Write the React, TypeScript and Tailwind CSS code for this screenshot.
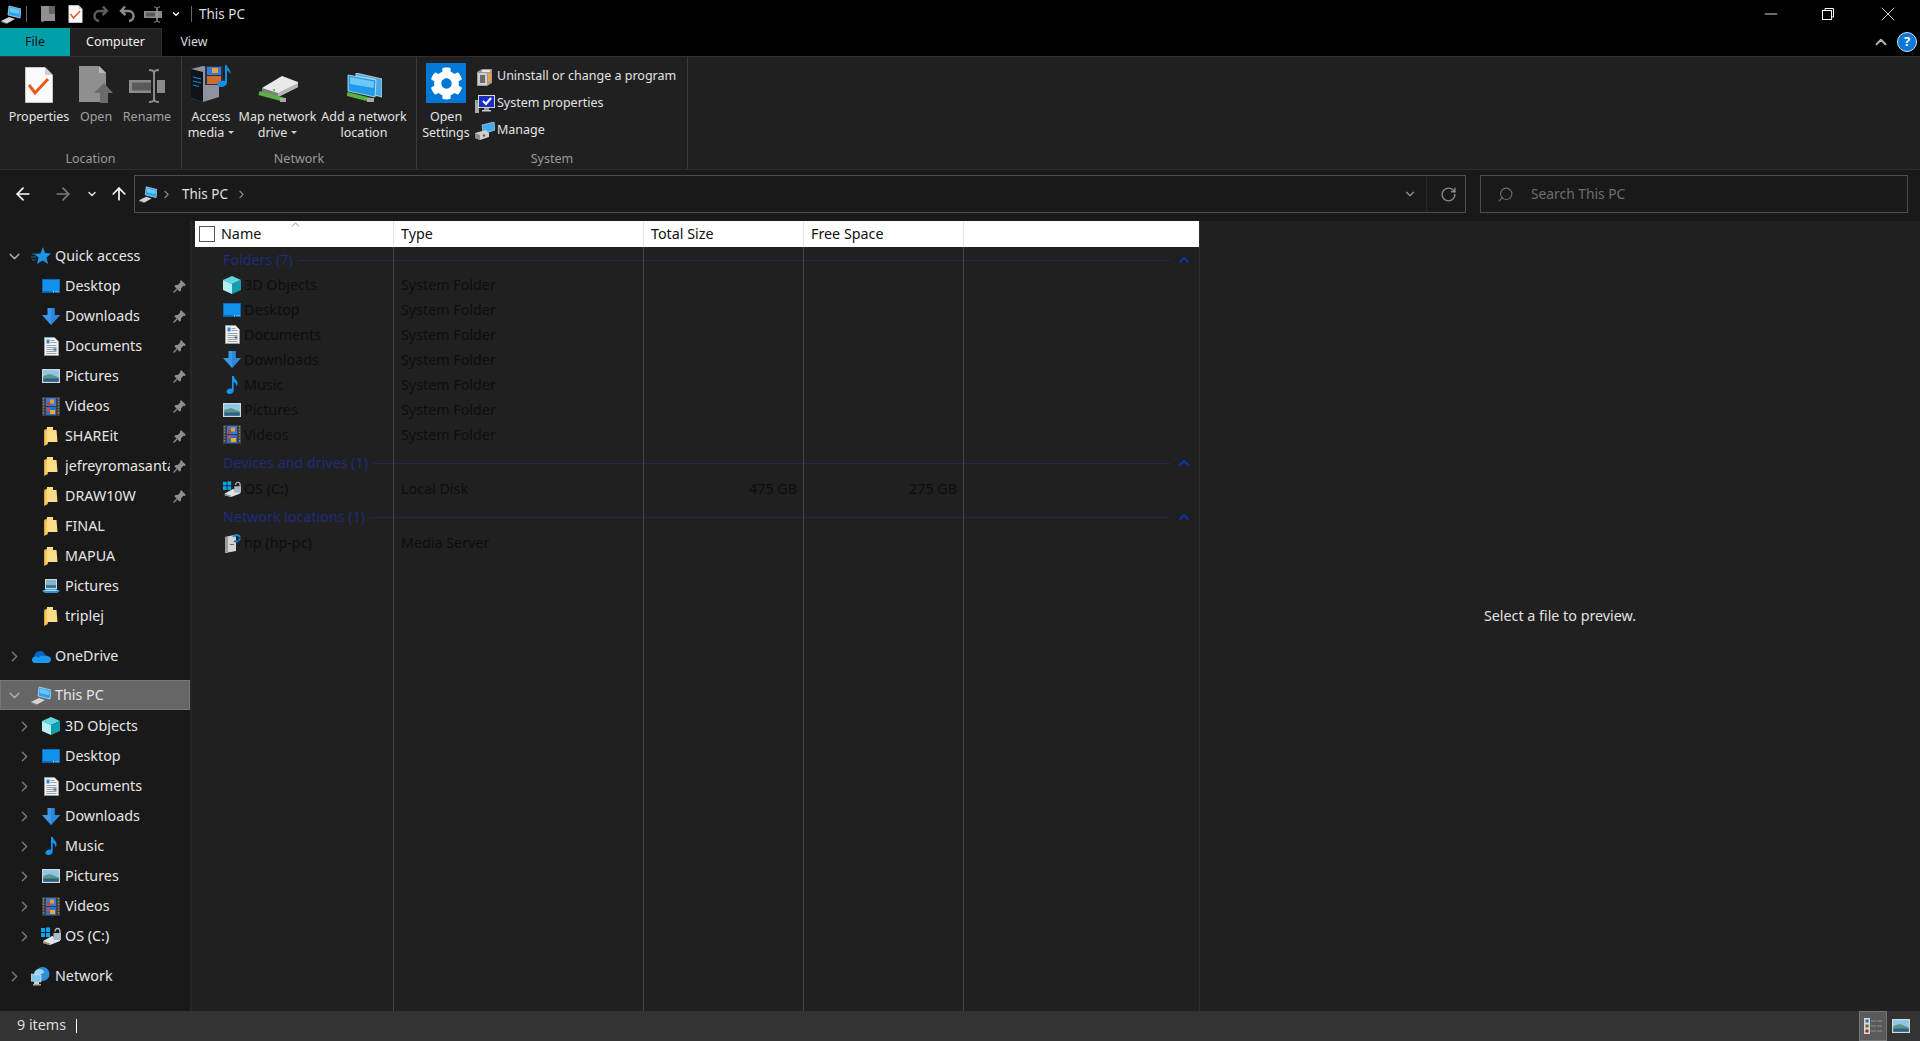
import type { ReactNode } from "react";
import { ArrowLeft, ArrowRight, ArrowUp, ChevronDown, ChevronRight, ChevronUp, Minus, RotateCw, Search, X } from "lucide-react";
import { FaCog } from "react-icons/fa";

const font = "font-['Noto_Sans','Liberation_Sans',sans-serif]";

function PcIcon({ w = 20 }: { w?: number }) {
  return (
    <svg width={w} height={w} viewBox="0 0 20 20">
      <polygon points="8,2 20,5 19,14 7,11" fill="#2aa4ee" stroke="#b9d9ee" strokeWidth="0.8" />
      <polygon points="9,3.5 18.5,6 18,10 8.5,8" fill="#6cc6f5" />
      <polygon points="0,17 8,13 14,15 6,19.5" fill="#d4d4d4" />
      <polygon points="0,17 6,19.5 6,20 0,18" fill="#8a8a8a" />
    </svg>
  );
}

function StarIcon() {
  return (
    <svg width="20" height="20" viewBox="0 0 20 20">
      <polygon points="12,1 14,7 20,7.5 15.5,11.5 17,18 11.5,14.5 6,18 7.5,11.5 3,8 9.5,7.5" fill="#1f93ea" />
      <path d="M1 8h4M0 11h5M1 14h4" stroke="#1668a8" strokeWidth="1" />
    </svg>
  );
}

function DesktopIcon() {
  return (
    <svg width="18" height="14" viewBox="0 0 18 14">
      <rect width="18" height="14" fill="#0c5fa8" />
      <rect x="0.7" y="0.7" width="16.6" height="12" fill="#1190ee" />
      <rect x="1" y="12" width="16" height="1" fill="#0b6cc0" />
      <path d="M11 12.7h1M13.5 12.7h1M15.5 12.7h1" stroke="#fff" strokeWidth="1" />
    </svg>
  );
}

function DownloadIcon() {
  return (
    <svg width="18" height="17" viewBox="0 0 18 17">
      <polygon points="5.5,0 12.5,0 12.5,7 18,7 9,17 0,7 5.5,7" fill="#3c97e9" />
      <polygon points="9,0 12.5,0 12.5,7 18,7 9,17" fill="#2b86de" />
    </svg>
  );
}

function DocIcon() {
  return (
    <svg width="15" height="19" viewBox="0 0 15 19">
      <polygon points="0.5,0.5 10.5,0.5 14.5,4.5 14.5,18.5 0.5,18.5" fill="#f1f1f1" stroke="#9a9a9a" />
      <rect x="2.5" y="2.5" width="3" height="4" fill="#2a8be0" />
      <path d="M6.5 3.5h4M6.5 5.5h6M2.5 8.5h10M2.5 10.5h10M2.5 12.5h7M2.5 14.5h10M2.5 16.5h10" stroke="#8d9aa8" strokeWidth="0.9" />
      <rect x="9.5" y="11.5" width="3" height="2" fill="#4a6a8a" />
    </svg>
  );
}

function PictureIcon() {
  return (
    <svg width="18" height="14" viewBox="0 0 18 14">
      <rect width="18" height="14" fill="#d6d6d6" />
      <rect x="1.2" y="1.2" width="15.6" height="11.6" fill="#8ec6e8" />
      <polygon points="1.2,7 8,5 16.8,8.5 16.8,10 1.2,10" fill="#5f9488" />
      <rect x="1.2" y="9.5" width="15.6" height="3.3" fill="#2e5f86" />
    </svg>
  );
}

function VideoIcon() {
  return (
    <svg width="18" height="19" viewBox="0 0 18 19">
      <rect width="18" height="19" fill="#3d3d3d" />
      <path d="M1.5 1v17M16.5 1v17" stroke="#8a8a8a" strokeWidth="1.4" strokeDasharray="1.4 1.4" />
      <rect x="4" y="1" width="10" height="8" fill="#3b78d8" />
      <rect x="8" y="2.5" width="4" height="4" fill="#e0a02a" />
      <rect x="5" y="5" width="3" height="3.5" fill="#c83e2e" />
      <rect x="4" y="10" width="10" height="8" fill="#2f6cd0" />
      <rect x="8" y="13" width="5" height="4" fill="#e2b030" />
      <rect x="5" y="11" width="3" height="3" fill="#d54a30" />
    </svg>
  );
}

function FolderIcon() {
  return (
    <svg width="14" height="19" viewBox="0 0 14 19">
      <polygon points="0,3 4,1 4,17 0,19" fill="#d9a93f" />
      <polygon points="3,0 9,0 9,3 12.5,3 13.5,15 3,15" fill="#fbdc87" />
      <polygon points="1,4 3,3 3,17 1,18" fill="#f3c860" />
    </svg>
  );
}

function PinIcon() {
  return (
    <svg width="13" height="13" viewBox="0 0 13 13">
      <polygon points="8,0 13,5 11.5,6 10.5,5.8 8,8.3 8,10.5 6.8,11.7 1.3,6.2 2.5,5 4.7,5 7.2,2.5 7,1.5" fill="#8b8e92" />
      <path d="M4 9L0.5 12.5" stroke="#8b8e92" strokeWidth="1.3" />
    </svg>
  );
}

function OneDriveIcon() {
  return (
    <svg width="20" height="13" viewBox="0 0 20 13">
      <path d="M3.5 7.5a5.5 5.5 0 0 1 10.5-3 4.5 4.5 0 0 1 2 3z" fill="#0864c8" />
      <path d="M4 13a3.2 3.2 0 0 1-.6-6.3c1.5-.3 3-.1 4 1 1.6-1.6 4-2.300 6-1.500 1.200-.7 3-.4 4.400.4A3.300 3.300 0 0 1 17 13z" fill="#1b98f0" />
    </svg>
  );
}

function CubeIcon() {
  return (
    <svg width="18" height="18" viewBox="0 0 18 18">
      <polygon points="9,0 18,4 9,8 0,4" fill="#62d6e2" />
      <polygon points="0,4 9,8 9,18 0,14" fill="#b4f0f2" />
      <polygon points="18,4 9,8 9,18 18,14" fill="#149fb0" />
    </svg>
  );
}

function MusicIcon() {
  return (
    <svg width="12" height="18" viewBox="0 0 12 18">
      <path d="M6 0h1.800c.3 3 4.200 4 3.700 8-.1 1-.5 1.800-1 2.400.2-2.400-1.400-4-2.800-4.600V14.500c0 2-2 3.500-4.200 3.500C1.600 18 .4 17 .4 15.500c0-1.900 2.700-3.500 5.600-3z" fill="#1296f0" />
    </svg>
  );
}

function DriveIcon() {
  return (
    <svg width="20" height="18" viewBox="0 0 20 18">
      <rect x="0" y="1" width="4" height="4" fill="#00a8f0" />
      <rect x="5" y="0.5" width="4" height="4.5" fill="#00a8f0" />
      <rect x="0" y="6" width="4" height="4" fill="#00a8f0" />
      <rect x="5" y="6" width="4" height="4" fill="#00a8f0" />
      <polygon points="2,14 11,9 19,12 19,14 9,18 2,16" fill="#e4e4e4" />
      <polygon points="2,14 9,16.5 9,18 2,16" fill="#8e8e8e" />
      <path d="M14 4.5a2.5 3 0 0 1 5 0V7" fill="none" stroke="#b9b9b9" strokeWidth="1.3" />
      <rect x="12.5" y="6" width="7.5" height="7" fill="#a9bccb" />
    </svg>
  );
}

function NetworkIcon() {
  return (
    <svg width="20" height="19" viewBox="0 0 20 19">
      <circle cx="11.5" cy="7" r="7" fill="#2c8fdc" />
      <path d="M8 2c3 0 5 1.500 5 3s-3 2-5 3-2 3 0 4c-3-1-5-3-5-5s2-5 5-5z" fill="#9bd4f4" />
      <polygon points="0,7 10,8 10,15 0,14" fill="#7cc8f4" stroke="#dcdcdc" strokeWidth="0.8" />
      <rect x="3" y="15" width="5" height="2" fill="#cfcfcf" />
      <rect x="2" y="17" width="8" height="1.5" fill="#a9a9a9" />
    </svg>
  );
}

function LaptopPictureIcon() {
  return (
    <svg width="18" height="14" viewBox="0 0 18 14">
      <rect x="3" y="0" width="12" height="10" fill="#d5d5d5" />
      <rect x="4" y="1" width="10" height="8" fill="#7fb7d8" />
      <rect x="4" y="6" width="10" height="3" fill="#3f7486" />
      <polygon points="0,12 4,10 14,10 18,12 15,14 3,14" fill="#2d93d9" />
      <polygon points="1,12 5,10.7 13,10.7 17,12" fill="#b6ddf5" />
    </svg>
  );
}

function MediaServerIcon() {
  return (
    <svg width="18" height="20" viewBox="0 0 18 20">
      <polygon points="2,4 11,2 13,4 13,18 2,20" fill="#d4d4d4" />
      <polygon points="2,4 5,3.5 5,19.5 2,20" fill="#9b9b9b" />
      <rect x="7" y="11" width="4" height="1" fill="#6a6a6a" />
      <path d="M10 4a4 4 0 0 1 7 0" fill="none" stroke="#1a8ee0" strokeWidth="2" />
      <path d="M17 5a4 4 0 0 1-6 3" fill="none" stroke="#1a6ec0" strokeWidth="2" />
    </svg>
  );
}

function PageCheckIcon({ w = 28, h = 36 }: { w?: number; h?: number }) {
  return (
    <svg width={w} height={h} viewBox="0 0 28 36">
      <polygon points="0.5,0.5 20,0.5 27.5,8 27.5,35.5 0.5,35.5" fill="#fafafa" stroke="#c8c8c8" />
      <polygon points="20,0.5 20,8 27.5,8" fill="#cfcfcf" />
      <path d="M4 18l6 8L23 12" fill="none" stroke="#ea5a1f" strokeWidth="3" />
    </svg>
  );
}

function OpenIcon() {
  return (
    <svg width="34" height="37" viewBox="0 0 34 37">
      <polygon points="0,0 20,0 27,7 27,36 0,36" fill="#8f8f8f" />
      <polygon points="20,0 20,7 27,7" fill="#b9b9b9" />
      <polygon points="25,17 34,27 29,27 29,37 21,37 21,27 15,27" fill="#6b6b6b" />
    </svg>
  );
}

function RenameIcon() {
  return (
    <svg width="36" height="34" viewBox="0 0 36 34">
      <rect x="0" y="11" width="36" height="13" fill="#8a8a8a" />
      <rect x="3" y="13.5" width="19" height="8" fill="#5a5a5a" />
      <rect x="22" y="9" width="6" height="17" fill="#202020" />
      <path d="M20 1c3 0 5 1 5 3v26c0 2-2 3-5 3M30 1c-3 0-5 1-5 3v26c0 2 2 3 5 3" fill="none" stroke="#8a8a8a" strokeWidth="2" />
    </svg>
  );
}

function AccessMediaIcon() {
  return (
    <svg width="40" height="38" viewBox="0 0 40 38">
      <polygon points="0,4 12,1 28,4 28,32 12,37 0,33" fill="#8d94a0" />
      <polygon points="0,4 12,7 12,37 0,33" fill="#0f1319" />
      <path d="M2 12l8 2M2 16l8 2M2 20l6 1.500" stroke="#1a8fe0" strokeWidth="1" />
      <rect x="14" y="1" width="18" height="19" fill="#26364a" />
      <rect x="16" y="2" width="14" height="8" fill="#3f78d0" />
      <rect x="21" y="3" width="6" height="5" fill="#e2a040" />
      <rect x="16" y="11" width="14" height="8" fill="#d06a30" />
      <path d="M34 0h1.500c.5 3 4.500 4 4 9-.8-2-2.500-3-3.500-3.500V18c0 2-3 4-6 4-2.500 0-3.500-1-3.500-2.500 0-2.500 3.500-4.500 7.500-3.500z" fill="#0f8fe8" />
    </svg>
  );
}

function MapDriveIcon() {
  return (
    <svg width="40" height="27" viewBox="0 0 40 27">
      <polygon points="4,12 24,0 40,6 40,11 20,21 4,16" fill="#e9e9e9" />
      <polygon points="4,12 20,17 20,21 4,16" fill="#7e7e7e" />
      <polygon points="20,17 40,7 40,11 20,21" fill="#b5b5b5" />
      <rect x="15" y="13" width="2" height="2" fill="#3bd23b" />
      <path d="M1 17l26 7" stroke="#58b33f" strokeWidth="4" />
      <rect x="22" y="22" width="6" height="4" fill="#a9a9a9" />
    </svg>
  );
}

function AddLocationIcon() {
  return (
    <svg width="35" height="30" viewBox="0 0 35 30">
      <polygon points="9,0 35,6 35,24 27,22 27,6 9,3" fill="#4aa9e0" stroke="#cfe6f5" strokeWidth="0.8" />
      <polygon points="1,2 29,7 28,24 1,18" fill="#1f9bea" stroke="#cfe6f5" strokeWidth="0.8" />
      <polygon points="3,4 27,8.5 26.5,15 3,11" fill="#6cc8f5" />
      <path d="M0 21l24 6" stroke="#58b33f" strokeWidth="4" />
      <rect x="20" y="25" width="7" height="4" fill="#a9a9a9" />
    </svg>
  );
}

function UninstallIcon() {
  return (
    <svg width="16" height="18" viewBox="0 0 16 18">
      <polygon points="0,4 5,1 15,1 15,15 10,18 0,18" fill="#9c9c9c" />
      <polygon points="1,5 10,5 10,17 1,17" fill="#cfcfcf" />
      <rect x="11" y="5" width="3" height="9" fill="#f0a030" />
      <rect x="3" y="7" width="5" height="8" fill="#6b6b6b" />
      <rect x="5" y="2" width="8" height="2" fill="#e8e8e8" />
    </svg>
  );
}

function SystemPropsIcon() {
  return (
    <svg width="20" height="18" viewBox="0 0 20 18">
      <rect x="0" y="5" width="4" height="13" fill="#a8a8a8" />
      <rect x="1" y="6" width="2" height="2" fill="#3bd23b" />
      <rect x="3" y="0" width="17" height="13" fill="#d8d8d8" />
      <rect x="4" y="1" width="15" height="11" fill="#1a2fc0" />
      <path d="M8 6l3 3 5-6" fill="none" stroke="#fff" strokeWidth="2" />
      <rect x="9" y="13" width="5" height="2" fill="#9a9a9a" />
      <rect x="7" y="15" width="9" height="1.5" fill="#c8c8c8" />
    </svg>
  );
}

function ManageIcon() {
  return (
    <svg width="20" height="18" viewBox="0 0 20 18">
      <polygon points="7,3 19,0 20,8 8,12" fill="#42aaef" stroke="#d5e6f0" strokeWidth="0.6" />
      <polygon points="0,11 11,8 14,11 14,15 5,18 0,16" fill="#cfcfcf" />
      <polygon points="0,11 5,13 5,18 0,16" fill="#8c8c8c" />
      <circle cx="9" cy="13.5" r="1.3" fill="#666" />
    </svg>
  );
}

function QatPage() {
  return (
    <svg width="14" height="16" viewBox="0 0 14 16">
      <polygon points="0,0 9,0 14,0 14,15 4,15 1,16 0,15" fill="#8f8f8f" />
      <rect x="8" y="0" width="6" height="8" fill="#000" opacity="0.3" />
    </svg>
  );
}

function QatUndo({ flip }: { flip?: boolean }) {
  return (
    <svg width="16" height="18" viewBox="0 0 16 18" className={flip ? "-scale-x-100" : ""}>
      <path d="M6 1.500L2 6l4.500 4M2.500 6H9a5 5 0 0 1 1 10" fill="none" stroke={flip ? "#5c5c5c" : "#8a8a8a"} strokeWidth="2.4" />
    </svg>
  );
}

function QatRename() {
  return (
    <svg width="18" height="17" viewBox="0 0 18 17">
      <rect x="0" y="5" width="18" height="7" fill="#8a8a8a" />
      <rect x="2" y="6.5" width="9" height="4" fill="#5a5a5a" />
      <path d="M10 1c2 0 3 .5 3 1.500v12c0 1-1 1.500-3 1.500M16 1c-2 0-3 .5-3 1.500v12c0 1 1 1.500 3 1.500" fill="none" stroke="#9a9a9a" strokeWidth="1" />
    </svg>
  );
}

function RibbonButton({ w, icon, lines, dim, arrow, className = "" }: { w: string; icon: ReactNode; lines: string[]; dim?: boolean; arrow?: boolean; className?: string }) {
  return (
    <div className={`${w} flex flex-col items-center ${className}`}>
      <div className="h-[46px] flex items-end justify-center">{icon}</div>
      <div className={`mt-[6px] text-center leading-[16px] whitespace-nowrap ${dim ? "text-[#a0a0a0]" : "text-[#e2e2e2]"}`}>
        {lines.map((l, i) => (
          <div key={l}>
            {l}
            {arrow && i === lines.length - 1 && (
              <span className="inline-block ml-[4px] mb-[3px] border-x-[3.5px] border-t-[3.5px] border-x-transparent border-t-[#d0d0d0]" />
            )}
          </div>
        ))}
      </div>
    </div>
  );
}

function RibbonGroup({ w, label, children }: { w: string; label: string; children: ReactNode }) {
  return (
    <div className={`${w} flex flex-col border-r border-[#3a3a3a]`}>
      <div className="h-[93px] flex">{children}</div>
      <div className="text-center text-[#9a9a9a] leading-[18px]">{label}</div>
    </div>
  );
}

type NavItem = { label: string; icon: ReactNode; pin?: boolean };

const quick: NavItem[] = [
  { label: "Desktop", icon: <DesktopIcon />, pin: true },
  { label: "Downloads", icon: <DownloadIcon />, pin: true },
  { label: "Documents", icon: <DocIcon />, pin: true },
  { label: "Pictures", icon: <PictureIcon />, pin: true },
  { label: "Videos", icon: <VideoIcon />, pin: true },
  { label: "SHAREit", icon: <FolderIcon />, pin: true },
  { label: "jefreyromasanta", icon: <FolderIcon />, pin: true },
  { label: "DRAW10W", icon: <FolderIcon />, pin: true },
  { label: "FINAL", icon: <FolderIcon /> },
  { label: "MAPUA", icon: <FolderIcon /> },
  { label: "Pictures", icon: <LaptopPictureIcon /> },
  { label: "triplej", icon: <FolderIcon /> },
];

const pcItems: NavItem[] = [
  { label: "3D Objects", icon: <CubeIcon /> },
  { label: "Desktop", icon: <DesktopIcon /> },
  { label: "Documents", icon: <DocIcon /> },
  { label: "Downloads", icon: <DownloadIcon /> },
  { label: "Music", icon: <MusicIcon /> },
  { label: "Pictures", icon: <PictureIcon /> },
  { label: "Videos", icon: <VideoIcon /> },
  { label: "OS (C:)", icon: <DriveIcon /> },
];

function TopRow({ label, icon, open, selected, className = "" }: { label: string; icon: ReactNode; open?: boolean; selected?: boolean; className?: string }) {
  return (
    <div className={`h-[30px] flex items-center pl-[5px] text-[#e6e6e6] border ${selected ? "bg-[#666666] border-[#777777]" : "border-transparent"} ${className}`}>
      {open ? <ChevronDown size={17} className="text-[#a8a8a8] shrink-0" /> : <ChevronRight size={17} className="text-[#7a7a7a] shrink-0" />}
      <span className="w-[20px] ml-[8px] flex justify-center shrink-0">{icon}</span>
      <span className="ml-[4px]">{label}</span>
    </div>
  );
}

function SubRow({ item, chevron }: { item: NavItem; chevron?: boolean }) {
  return (
    <div className="h-[30px] flex items-center pl-[16px] pr-[5px] text-[#e6e6e6]">
      <span className="w-[16px] shrink-0">{chevron && <ChevronRight size={17} className="text-[#7a7a7a]" />}</span>
      <span className="w-[20px] ml-[9px] flex justify-center shrink-0">{item.icon}</span>
      <span className="ml-[4px] w-[105px] overflow-hidden whitespace-nowrap shrink-0">{item.label}</span>
      {item.pin && <span className="ml-[3px]"><PinIcon /></span>}
    </div>
  );
}

const cols = "grid grid-cols-[199px_250px_160px_160px_1fr]";

function GroupHeader({ label, className = "" }: { label: string; className?: string }) {
  return (
    <div className={`h-[26px] flex items-center pl-[28px] pr-[7px] text-[#1f2b7c] ${className}`}>
      <span className="whitespace-nowrap">{label}</span>
      <span className="flex-1 h-px bg-[#1a2b52] ml-[5px]" />
      <ChevronUp size={16} strokeWidth={3.5} className="text-[#0b33a0] ml-[6px]" />
    </div>
  );
}

function FileRow({ icon, name, type, total, free, className = "" }: { icon: ReactNode; name: string; type: string; total?: string; free?: string; className?: string }) {
  return (
    <div className={`${cols} h-[25px] items-center text-[#0e0e0e] ${className}`}>
      <div className="flex items-center pl-[28px]">
        <span className="w-[18px] flex justify-center shrink-0">{icon}</span>
        <span className="ml-[3px]">{name}</span>
      </div>
      <div className="pl-[7px]">{type}</div>
      <div className="pr-[7px] text-right">{total}</div>
      <div className="pr-[7px] text-right">{free}</div>
      <div />
    </div>
  );
}

function HeaderCell({ label, className = "" }: { label: string; className?: string }) {
  return <div className={`h-full flex items-center pl-[7px] border-r border-[#e5e5e5] ${className}`}>{label}</div>;
}

const folders: [ReactNode, string][] = [
  [<CubeIcon />, "3D Objects"],
  [<DesktopIcon />, "Desktop"],
  [<DocIcon />, "Documents"],
  [<DownloadIcon />, "Downloads"],
  [<MusicIcon />, "Music"],
  [<PictureIcon />, "Pictures"],
  [<VideoIcon />, "Videos"],
];

export default function App() {
  return (
    <div className={`${font} h-screen w-full flex flex-col bg-[#202020] text-[14.3px] overflow-hidden`}>
      {/* title bar */}
      <div className="h-[28px] bg-black flex items-center shrink-0 text-[13.5px]">
        <span className="ml-[1px] w-[20px]"><PcIcon /></span>
        <span className="ml-[5px] w-px h-[16px] bg-[#666666]" />
        <span className="ml-[14px]"><QatPage /></span>
        <span className="ml-[13px]"><PageCheckIcon w={15} h={18} /></span>
        <span className="ml-[10px]"><QatUndo flip /></span>
        <span className="ml-[10px]"><QatUndo /></span>
        <span className="ml-[9px]"><QatRename /></span>
        <ChevronDown size={10} className="ml-[9px] text-white" strokeWidth={3} />
        <span className="ml-[10px] w-px h-[16px] bg-[#666666]" />
        <span className="ml-[7px] text-[#dddddd]">This PC</span>
        <div className="ml-auto flex items-center">
          <Minus size={20} className="text-white mr-[41px]" strokeWidth={1} />
          <svg width="12" height="12" viewBox="0 0 12 12" className="mr-[42px]">
            <rect x="0.5" y="2.5" width="9" height="9" fill="none" stroke="#fff" />
            <path d="M3 2.500V.5h8.500V9H9.500" fill="none" stroke="#fff" />
          </svg>
          <X size={24} className="text-white mr-[20px]" strokeWidth={0.8} />
        </div>
      </div>
      {/* tabs */}
      <div className="h-[28px] bg-black flex items-stretch shrink-0 text-[12.4px]">
        <div className="w-[70px] bg-[#00a0a8] flex items-center justify-center text-[#101010]">File</div>
        <div className="w-[92px] bg-[#202020] border-t border-r border-[#2f2f2f] flex items-center justify-center text-[#f0f0f0]">Computer</div>
        <div className="w-[64px] flex items-center justify-center text-[#dddddd]">View</div>
        <div className="ml-auto flex items-center pr-[3px]">
          <ChevronUp size={18} className="text-[#b0b0b0] mr-[7px]" strokeWidth={2.5} />
          <span className="w-[20px] h-[20px] rounded-full bg-[#0b78d8] border border-[#cfe4f5] text-white text-[13px] font-bold flex items-center justify-center">?</span>
        </div>
      </div>
      {/* ribbon */}
      <div className="h-[114px] border-y border-[#2f2f2f] flex shrink-0 text-[12.5px]">
        <RibbonGroup w="w-[182px]" label="Location">
          <div className="w-[5px]" />
          <RibbonButton w="w-[68px]" icon={<PageCheckIcon />} lines={["Properties"]} />
          <RibbonButton w="w-[46px]" icon={<OpenIcon />} lines={["Open"]} dim />
          <RibbonButton w="w-[56px]" icon={<RenameIcon />} lines={["Rename"]} dim />
        </RibbonGroup>
        <RibbonGroup w="w-[235px]" label="Network">
          <div className="w-[1px]" />
          <RibbonButton w="w-[56px]" icon={<AccessMediaIcon />} lines={["Access", "media"]} arrow />
          <RibbonButton w="w-[77px]" icon={<MapDriveIcon />} lines={["Map network", "drive"]} arrow />
          <RibbonButton w="w-[90px]" className="ml-[3px]" icon={<AddLocationIcon />} lines={["Add a network", "location"]} />
        </RibbonGroup>
        <RibbonGroup w="w-[271px]" label="System">
          <div className="w-[4px]" />
          <div className="w-[50px] flex flex-col items-center">
            <div className="h-[46px] flex items-end justify-center">
              <span className="w-[40px] h-[40px] bg-[#0078d7] flex items-center justify-center text-white"><FaCog size={33} /></span>
            </div>
            <div className="mt-[6px] text-center leading-[16px] text-[#e2e2e2]"><div>Open</div><div>Settings</div></div>
          </div>
          <div className="ml-[3px] flex flex-col pt-[6px] text-[#e2e2e2]">
            {[
              { l: "Uninstall or change a program", i: <UninstallIcon /> },
              { l: "System properties", i: <SystemPropsIcon /> },
              { l: "Manage", i: <ManageIcon /> },
            ].map((r) => (
              <div key={r.l} className="h-[27px] flex items-center whitespace-nowrap">
                <span className="w-[21px] flex justify-center shrink-0">{r.i}</span>
                <span className="ml-[2px]">{r.l}</span>
              </div>
            ))}
          </div>
        </RibbonGroup>
      </div>
      {/* navigation */}
      <div className="h-[51px] bg-[#191919] flex items-start pt-[5px] shrink-0 text-[13.5px]">
        <div className="w-[134px] h-[38px] flex items-center shrink-0">
          <ArrowLeft size={20} className="ml-[13px] text-white" strokeWidth={2} />
          <ArrowRight size={20} className="ml-[20px] text-[#7c7c7c]" strokeWidth={2} />
          <ChevronDown size={12} className="ml-[13px] text-[#e0e0e0]" strokeWidth={3} />
          <ArrowUp size={20} className="ml-[11px] text-white" strokeWidth={2} />
        </div>
        <div className="w-[1332px] h-[38px] border border-[#4d4d4d] flex items-center text-[#e0e0e0]">
          <span className="ml-[4px]"><PcIcon w={18} /></span>
          <ChevronRight size={13} className="ml-[3px] text-[#888888]" />
          <span className="ml-[9px]">This PC</span>
          <ChevronRight size={13} className="ml-[7px] text-[#888888]" />
          <ChevronDown size={14} className="ml-auto mr-[9px] text-[#8a8a8a]" strokeWidth={2.5} />
          <div className="w-px h-full bg-[#262626]" />
          <RotateCw size={17} className="ml-[13px] mr-[8px] text-[#8a8a8a]" strokeWidth={2} />
        </div>
        <div className="ml-[14px] w-[428px] h-[38px] border border-[#4d4d4d] flex items-center text-[#6e6e6e] text-[13.8px]">
          <Search size={17} className="ml-[16px] -scale-x-100" strokeWidth={1.5} />
          <span className="ml-[17px]">Search This PC</span>
        </div>
      </div>
      {/* body */}
      <div className="flex-1 min-h-0 flex">
        <div className="w-[192px] shrink-0 bg-[#191919] border-r-2 border-[#262626] pt-[20px]">
          <TopRow label="Quick access" icon={<StarIcon />} open />
          {quick.map((q, i) => <SubRow key={i} item={q} />)}
          <TopRow label="OneDrive" icon={<OneDriveIcon />} className="mt-[10px]" />
          <TopRow label="This PC" icon={<PcIcon />} open selected className="mt-[9px] w-[190px]" />
          <div className="mt-[1px]">
            {pcItems.map((q) => <SubRow key={q.label} item={q} chevron />)}
          </div>
          <TopRow label="Network" icon={<NetworkIcon />} className="mt-[10px]" />
        </div>
        <div className="w-[1008px] shrink-0 pl-[3px] border-r border-[#2d2d2d] relative">
          <div className={`${cols} h-[26px] bg-white text-[#111111] items-center relative`}>
            <div className="h-full flex items-center pl-[4px] border-r border-[#e5e5e5]">
              <span className="w-[16px] h-[16px] border border-[#555555]" />
              <span className="ml-[6px]">Name</span>
            </div>
            <HeaderCell label="Type" />
            <HeaderCell label="Total Size" />
            <HeaderCell label="Free Space" />
            <div />
            <ChevronUp size={13} className="absolute left-[94px] -top-[3px] text-[#777777]" strokeWidth={1.5} />
          </div>
          <GroupHeader label="Folders (7)" className="-mb-[1px]" />
          {folders.map(([icon, name]) => <FileRow key={name} icon={icon} name={name} type="System Folder" />)}
          <GroupHeader label="Devices and drives (1)" className="mt-[3px]" />
          <FileRow icon={<DriveIcon />} name="OS (C:)" type="Local Disk" total="475 GB" free="275 GB" />
          <GroupHeader label="Network locations (1)" className="mt-[3px]" />
          <FileRow icon={<MediaServerIcon />} name="hp (hp-pc)" type="Media Server" />
          {/* column rules drawn over the rows */}
          <div className="absolute top-[26px] bottom-0 left-[201px] w-px bg-[#40454d]" />
          <div className="absolute top-[26px] bottom-0 left-[451px] w-px bg-[#40454d]" />
          <div className="absolute top-[26px] bottom-0 left-[611px] w-px bg-[#40454d]" />
          <div className="absolute top-[26px] bottom-0 left-[771px] w-px bg-[#40454d]" />
        </div>
        <div className="flex-1 flex items-center justify-center text-[#e0e0e0]">Select a file to preview.</div>
      </div>
      {/* status */}
      <div className="h-[30px] bg-[#333333] flex items-center pl-[17px] text-[#dddddd] shrink-0">
        <span className="pb-[2px]">9 items</span>
        <span className="ml-[10px] w-px h-[14px] bg-white" />
        <div className="ml-auto h-full w-[28px] bg-[#5a5a5a] border border-[#757575] flex items-center justify-center">
          <svg width="18" height="16" viewBox="0 0 18 16">
            <rect x="0" y="0" width="6" height="16" fill="#d8d8d8" />
            <rect x="1.5" y="1.5" width="3" height="3" fill="#2e6fb0" />
            <rect x="1.5" y="6.5" width="3" height="3" fill="#6b6b20" />
            <rect x="1.5" y="11.5" width="3" height="3" fill="#a02020" />
            <path d="M7 3h5M13 3h5M7 8h5M13 8h5M7 13h5M13 13h5" stroke="#8f8f8f" strokeWidth="1" />
          </svg>
        </div>
        <span className="ml-[5px] mr-[10px]"><PictureIcon /></span>
      </div>
    </div>
  );
}
